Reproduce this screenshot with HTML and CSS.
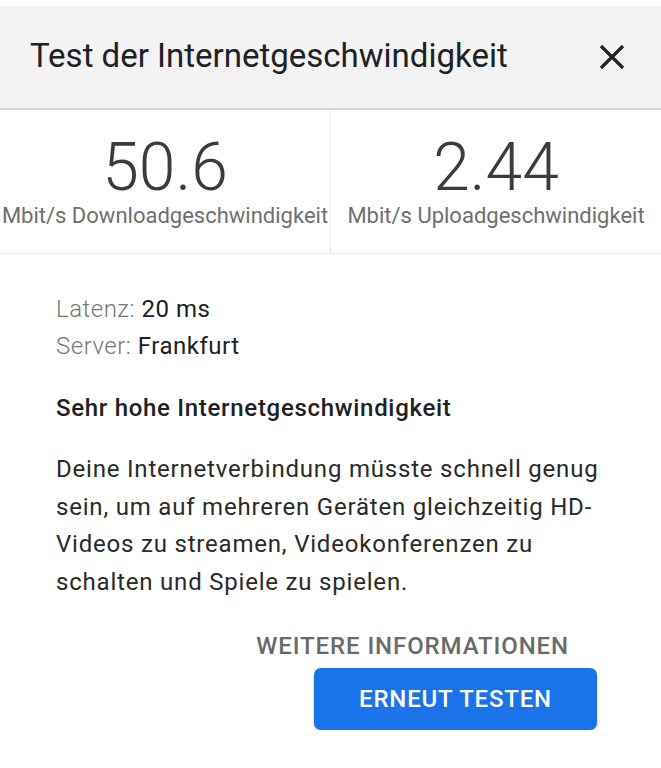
FILE: index.html
```html
<!DOCTYPE html>
<html lang="de">
<head>
    <meta charset="UTF-8">
    <meta name="viewport" content="width=device-width, initial-scale=1.0">
    <title>Test der Internetgeschwindigkeit</title>
    <link rel="stylesheet" href="styles.css">
</head>
<body>
    <div class="dialog">
        <header class="dialog-header">
            <h1>Test der Internetgeschwindigkeit</h1>
            <button class="close-button" aria-label="Schließen">
                <svg width="26" height="26" viewBox="0 0 26 26">
                    <path d="M2 2 L24 24 M24 2 L2 24" stroke="#202124" stroke-width="3.2" fill="none"/>
                </svg>
            </button>
        </header>
        <section class="stats">
            <div class="stat">
                <div class="stat-value">50.6</div>
                <div class="stat-label">Mbit/s Downloadgeschwindigkeit</div>
            </div>
            <div class="stat">
                <div class="stat-value">2.44</div>
                <div class="stat-label">Mbit/s Uploadgeschwindigkeit</div>
            </div>
        </section>
        <section class="details">
            <p class="meta"><span class="meta-key">Latenz:</span> 20 ms</p>
            <p class="meta"><span class="meta-key">Server:</span> Frankfurt</p>
            <h2>Sehr hohe Internetgeschwindigkeit</h2>
            <p class="summary">Deine Internetverbindung müsste schnell genug sein, um auf mehreren Geräten gleichzeitig HD-Videos zu streamen, Videokonferenzen zu schalten und Spiele zu spielen.</p>
            <div class="actions">
                <a class="more-link" href="#">WEITERE INFORMATIONEN</a>
                <button class="retry-button">ERNEUT TESTEN</button>
            </div>
        </section>
    </div>
</body>
</html>
```

FILE: styles.css
```css
body {
    font-family: Roboto, "Noto Sans", sans-serif;
    background-color: #fff;
    margin: 0;
    padding: 0;
    color: #202124;
}

.dialog {
    padding-top: 6px;
}

.dialog-header {
    display: flex;
    align-items: center;
    justify-content: space-between;
    height: 102px;
    padding: 0 36px 0 30px;
    background-color: #f3f3f3;
    border-bottom: 2px solid #d6d6d6;
}

.dialog-header h1 {
    margin: 0;
    font-size: 33px;
    font-weight: 400;
    color: #202124;
    padding-bottom: 4px;
}

.close-button {
    background: none;
    border: none;
    padding: 0;
    width: 26px;
    height: 26px;
    cursor: pointer;
}

.stats {
    display: flex;
    border-bottom: 1px solid #e8e8e8;
}

.stat {
    flex: 1;
    height: 143px;
    display: flex;
    flex-direction: column;
    align-items: center;
    padding-top: 23px;
    box-sizing: border-box;
}

.stat + .stat {
    border-left: 1px solid #e8e8e8;
}

.stat-value {
    font-size: 66px;
    font-weight: 300;
    line-height: 70px;
    color: #3c3c3c;
}

.stat-label {
    font-size: 22px;
    color: #6f6f6f;
    white-space: nowrap;
}

.details {
    padding: 37px 50px 0 56px;
}

.meta {
    margin: 0;
    font-size: 24px;
    line-height: 37px;
    letter-spacing: 0.5px;
    color: #202124;
}

.meta-key {
    font-weight: 300;
    color: #777;
}

.details h2 {
    margin: 25px 0 0;
    font-size: 24px;
    font-weight: 500;
    line-height: 37px;
    letter-spacing: 0.7px;
}

.summary {
    margin: 24px 0 0;
    font-size: 24px;
    line-height: 37.5px;
    letter-spacing: 0.8px;
    color: #2a2a2a;
}

.actions {
    display: flex;
    flex-direction: column;
    align-items: flex-end;
    margin-top: 27px;
}

.more-link {
    font-size: 24px;
    font-weight: 500;
    letter-spacing: 0.9px;
    color: #6a6a6a;
    text-decoration: none;
    line-height: 37px;
    margin-right: 42px;
}

.retry-button {
    margin-top: 3px;
    margin-right: 14px;
    width: 283px;
    height: 62px;
    background-color: #1a73e8;
    color: #fff;
    border: none;
    border-radius: 7px;
    font-family: Roboto, sans-serif;
    font-size: 24px;
    font-weight: 500;
    letter-spacing: 0.8px;
    cursor: pointer;
    box-shadow: 0 1px 3px rgba(0, 0, 0, 0.25);
}
```
